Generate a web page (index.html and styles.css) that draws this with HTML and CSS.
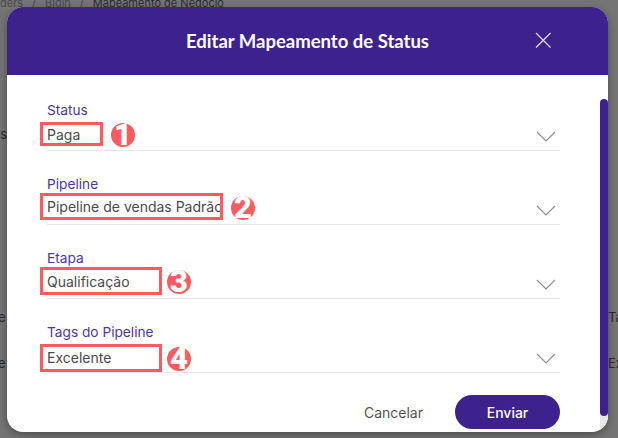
FILE: index.html
```html
<!DOCTYPE html>
<html lang="pt-BR">

<head>
    <meta charset="UTF-8">
    <title>Editar Mapeamento de Status</title>
    <link rel="stylesheet" href="styles.css">
</head>

<body>
    <!-- pagina por tras do modal -->
    <div class="crumbs">
        <span>ders</span>
        <span>/</span>
        <span>Bigin</span>
        <span>/</span>
        <span class="crumb-current">Mapeamento de Negócio</span>
    </div>
    <span class="behind behind-1">ts</span>
    <span class="behind behind-2">e</span>
    <span class="behind behind-3">e</span>
    <span class="behind behind-4">Ta</span>
    <span class="behind behind-5">Ex</span>

    <div class="modal">
        <div class="modal-header">
            <h1 class="modal-title">Editar Mapeamento de Status</h1>
            <svg class="modal-close" width="16" height="16" viewBox="0 0 16 16">
                <path d="M1 1L15.500 15.500M15.500 1L1 15.500" stroke="#e4e0ee" stroke-width="1.200" fill="none" />
            </svg>
        </div>

        <div class="modal-body">
            <div class="scrollbar"></div>
            <div class="scrollbar-rest"></div>

            <div class="field">
                <label class="field-label">Status</label>
                <div class="field-select">
                    <span class="mark mark-1">Paga</span>
                    <span class="num num-1">1</span>
                    <svg class="arrow" width="20" height="11" viewBox="0 0 20 11"><path d="M1 1L10 10L19 1" stroke="#8c8c8c" stroke-width="1.100" fill="none" /></svg>
                </div>
            </div>

            <div class="field">
                <label class="field-label">Pipeline</label>
                <div class="field-select">
                    <span class="mark mark-2">Pipeline de vendas Padrão</span>
                    <span class="num num-2">2</span>
                    <svg class="arrow" width="20" height="11" viewBox="0 0 20 11"><path d="M1 1L10 10L19 1" stroke="#8c8c8c" stroke-width="1.100" fill="none" /></svg>
                </div>
            </div>

            <div class="field">
                <label class="field-label">Etapa</label>
                <div class="field-select">
                    <span class="mark mark-3">Qualificação</span>
                    <span class="num num-3">3</span>
                    <svg class="arrow" width="20" height="11" viewBox="0 0 20 11"><path d="M1 1L10 10L19 1" stroke="#8c8c8c" stroke-width="1.100" fill="none" /></svg>
                </div>
            </div>

            <div class="field">
                <label class="field-label">Tags do Pipeline</label>
                <div class="field-select">
                    <span class="mark mark-4">Excelente</span>
                    <span class="num num-4">4</span>
                    <svg class="arrow" width="20" height="11" viewBox="0 0 20 11"><path d="M1 1L10 10L19 1" stroke="#8c8c8c" stroke-width="1.100" fill="none" /></svg>
                </div>
            </div>

            <div class="modal-footer">
                <button class="btn-cancel">Cancelar</button>
                <button class="btn-send">Enviar</button>
            </div>
        </div>
    </div>
</body>

</html>
```

FILE: styles.css
```css
* {
    box-sizing: border-box;
}

html,
body {
    height: 100%;
}

body {
    margin: 0;
    padding: 7px 10px 6px 7px;
    background-color: #757575;
    font-family: "Inter", "Liberation Sans", sans-serif;
    overflow: hidden;
    position: relative;
}

/* texto da pagina atras do overlay */
.crumbs {
    position: absolute;
    top: -5px;
    left: 0;
    display: flex;
    gap: 9px;
    font-size: 11px;
    line-height: 16px;
    color: #4a4a4a;
    white-space: nowrap;
}

.crumb-current {
    color: #2c2c2c;
}

.behind {
    position: absolute;
    font-size: 13px;
    line-height: 16px;
    color: #2a2a33;
}

.behind-1 {
    top: 126px;
    left: -4px;
}

.behind-2 {
    top: 309px;
    left: -2px;
}

.behind-3 {
    top: 355px;
    left: -2px;
}

.behind-4 {
    top: 309px;
    left: 608px;
}

.behind-5 {
    top: 355px;
    left: 608px;
}

.modal {
    position: relative;
    width: 601px;
    height: 425px;
    background-color: #fff;
    border-radius: 16px;
    overflow: hidden;
    box-shadow: 0 3px 8px rgba(0, 0, 0, .35);
}

.modal-header {
    height: 68px;
    background-color: #3d228d;
    display: flex;
    align-items: center;
    justify-content: center;
    position: relative;
}

.modal-title {
    margin: 0;
    font-family: "Lato", "Liberation Sans", sans-serif;
    font-size: 18.500px;
    font-weight: 700;
    color: #fff;
}

.modal-close {
    position: absolute;
    left: 528px;
    top: 25px;
}

.modal-body {
    position: relative;
    padding: 27px 48px 0 40px;
}

.scrollbar {
    position: absolute;
    top: 24px;
    right: 0;
    width: 8px;
    height: 317px;
    background-color: #3d228d;
    border-radius: 4px;
    z-index: 1;
}

/* resto da trilha embaixo da barra */
.scrollbar-rest {
    position: absolute;
    top: 337px;
    right: 0;
    width: 8px;
    height: 20px;
    background-color: #e8e8e8;
}

.field {
    height: 74px;
}

.field-label {
    display: block;
    font-size: 13.700px;
    line-height: 16px;
    color: #4f37a3;
}

.field-select {
    display: flex;
    align-items: flex-start;
    height: 33px;
    border-bottom: 1px solid #e6e6e6;
    font-size: 14px;
    color: #4a4a4a;
    position: relative;
}

/* contorno vermelho de cada valor */
.mark {
    display: flex;
    align-items: center;
    margin-left: -7px;
    padding-left: 4px;
    border: 3px solid #ff5a5f;
    white-space: nowrap;
    overflow: hidden;
    flex: none;
}

.mark-1 {
    width: 63px;
    height: 24px;
    margin-top: 4px;
}

.mark-2 {
    width: 183px;
    height: 27px;
    margin-top: 1px;
}

.mark-3 {
    width: 122px;
    height: 28px;
    margin-top: 1px;
}

.mark-4 {
    width: 122px;
    height: 28px;
    margin-top: 4px;
    padding-bottom: 2px;
}

.num {
    width: 24px;
    height: 24px;
    border-radius: 50%;
    background-color: #ff5a5f;
    color: #fff;
    font-family: "Roboto", sans-serif;
    font-size: 31px;
    font-weight: 900;
    line-height: 24px;
    text-align: center;
    flex: none;
}

.num-1 {
    margin: 5px 0 0 8px;
}

.num-2 {
    margin: 4px 0 0 8px;
}

.num-3 {
    margin: 4px 0 0 5px;
}

.num-4 {
    margin: 7px 0 0 5px;
}

.arrow {
    position: absolute;
    right: 4px;
    top: 13px;
}

.modal-footer {
    display: flex;
    justify-content: flex-end;
    align-items: center;
    gap: 32px;
    margin-top: -3px;
}

.btn-cancel {
    border: 0;
    padding: 0;
    background: none;
    font-family: inherit;
    font-size: 14px;
    color: #555;
}

.btn-send {
    width: 105px;
    height: 34px;
    border: 0;
    border-radius: 17px;
    background-color: #3d228d;
    font-family: inherit;
    font-size: 14px;
    font-weight: 500;
    color: #fff;
}
```
